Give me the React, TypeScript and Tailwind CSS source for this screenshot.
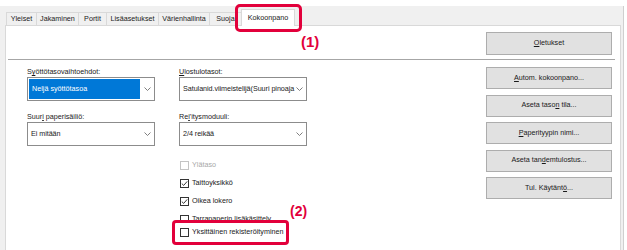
import React from 'react';

const tabs = [
  { label: 'Yleiset', w: 'w-[30px]' },
  { label: 'Jakaminen', w: 'w-[42px]' },
  { label: 'Portit', w: 'w-[28px]' },
  { label: 'Lisäasetukset', w: 'w-[52px]' },
  { label: 'Värienhallinta', w: 'w-[51px]' },
  { label: 'Suoja', w: 'w-[32px]' },
];

const Chevron: React.FC = () => (
  <svg width="7" height="4" viewBox="0 0 7 4" className="shrink-0">
    <polyline points="0.5,0.5 3.5,3.5 6.5,0.5" fill="none" stroke="#707070" strokeWidth="0.9" />
  </svg>
);

const Select: React.FC<{ text: string; active?: boolean }> = ({ text, active }) => (
  <div className="h-[24px] border border-[#8c8c8c] bg-white flex items-center pl-[1px] pr-[3px]">
    <div
      className={
        active
          ? 'flex-1 h-[20px] flex items-center pl-[3px] bg-[#0078d7] text-white whitespace-nowrap mr-[4px]'
          : 'flex-1 min-w-0 h-[20px] flex items-center pl-[2px] whitespace-nowrap tracking-[-0.05px] mr-[1px]'
      }
    >
      {text}
    </div>
    <Chevron />
  </div>
);

const Check: React.FC<{ checked?: boolean; disabled?: boolean }> = ({ checked, disabled }) => (
  <div
    className={
      disabled
        ? 'w-[9px] h-[9px] border border-[#c4c4c4] bg-white shrink-0'
        : 'w-[9px] h-[9px] border border-[#333333] bg-white shrink-0 flex items-center justify-center'
    }
  >
    {checked && (
      <svg width="7" height="7" viewBox="0 0 7 7">
        <polyline points="0.8,3.6 2.7,5.4 6.2,1.4" fill="none" stroke="#222" strokeWidth="0.9" />
      </svg>
    )}
  </div>
);

const Button: React.FC<{ children: React.ReactNode; h?: string }> = ({ children, h = 'h-[22px]' }) => (
  <div className={`${h} w-[126px] bg-[#e1e1e1] border border-[#adadad] flex items-center justify-center whitespace-nowrap`}>
    {children}
  </div>
);

const App: React.FC = () => {
  return (
    <div className="relative w-[627px] h-[250px] overflow-hidden bg-white pt-[6px] pr-[3px] font-['Liberation_Sans',Arial,sans-serif] text-[7.2px] text-[#1a1a1a]">
      <div className="h-full bg-[#f0f0f0] border-r border-[#cfcfcf] pl-[5px] pr-[2px] flex flex-col">
        {/* Tab strip */}
        <div className="h-[19px] flex items-end pl-[1px] shrink-0">
          {tabs.map((t) => (
            <div
              key={t.label}
              className={`${t.w} h-[13px] border-l border-t border-[#d9d9d9] flex items-center justify-center whitespace-nowrap overflow-hidden`}
            >
              {t.label}
            </div>
          ))}
          <div className="relative z-10 w-[54px] h-[17px] -mb-px bg-white border-l border-t border-r border-[#d9d9d9] flex items-center justify-center">
            Kokoonpano
          </div>
        </div>

        {/* Panel */}
        <div className="flex-1 bg-white border-l border-t border-r border-[#d9d9d9] flex flex-col">
          <div className="flex justify-end pt-[6px] pr-[8px]">
            <Button h="h-[23px]">
              <span><u>O</u>letukset</span>
            </Button>
          </div>
          <div className="mt-[4px] ml-[2px] mr-[5px] border-t border-[#a6a6a6]" />

          <div className="flex justify-between pl-[21px] pr-[8px]">
            {/* Left fields */}
            <div className="pt-[7px] grid grid-cols-[128px_128px] gap-x-[24px]">
              <div className="flex flex-col">
                <div className="leading-[9px] mb-[1px]">S<u>y</u>öttötasovaihtoehdot:</div>
                <Select text="Neljä syöttötasoa" active />
                <div className="leading-[9px] mt-[11px] mb-[1px]">Suur<u>i</u> paperisäiliö:</div>
                <Select text="Ei mitään" />
              </div>
              <div className="flex flex-col">
                <div className="leading-[9px] mb-[1px]"><u>U</u>lostulotasot:</div>
                <Select text="Satulanid.viimeistelijä(Suuri pinoaja" />
                <div className="leading-[9px] mt-[11px] mb-[1px]">Re<u>i</u>'itysmoduuli:</div>
                <Select text="2/4 reikää" />
                <div className="mt-[10px] ml-[1px] flex flex-col">
                  <div className="h-[18px] flex items-center gap-[3px] text-[#a8a8a8]">
                    <Check disabled />
                    <span>Ylätaso</span>
                  </div>
                  <div className="h-[18px] flex items-center gap-[3px]">
                    <Check checked />
                    <span>Taittoyksikkö</span>
                  </div>
                  <div className="h-[18px] flex items-center gap-[3px]">
                    <Check checked />
                    <span>Oikea lokero</span>
                  </div>
                  <div className="h-[18px] flex items-center gap-[3px]">
                    <Check />
                    <span>Tarrapaperin lisäkäsittely</span>
                  </div>
                </div>
              </div>
            </div>

            {/* Right buttons */}
            <div className="pt-[7px] flex flex-col gap-[5.5px]">
              <Button><span><u>A</u>utom. kokoonpano...</span></Button>
              <Button><span>Aseta taso<u>n</u> tila...</span></Button>
              <Button><span><u>P</u>aperityypin nimi...</span></Button>
              <Button><span>Aseta tan<u>d</u>emtulostus...</span></Button>
              <Button><span>Tul. Käytänt<u>ö</u>...</span></Button>
            </div>
          </div>
        </div>
      </div>

      {/* Callout (1) */}
      <div className="absolute left-[235px] top-[4px] w-[67px] h-[28px] border-[3px] border-[#e2003b] rounded-[5px]" />
      <div className="absolute left-[301px] top-[34px] text-[15px] leading-[15px] font-bold text-[#e2003b]">(1)</div>

      {/* Callout (2) */}
      <div className="absolute left-[172px] top-[220px] w-[117px] h-[25px] border-[3px] border-[#e2003b] rounded-[4px] bg-white flex items-center pl-[5px] gap-[3px]">
        <Check />
        <span>Yksittäinen rekisteröityminen</span>
      </div>
      <div className="absolute left-[290px] top-[204px] text-[14px] leading-[14px] font-bold text-[#e2003b]">(2)</div>
    </div>
  );
};

export default App;
